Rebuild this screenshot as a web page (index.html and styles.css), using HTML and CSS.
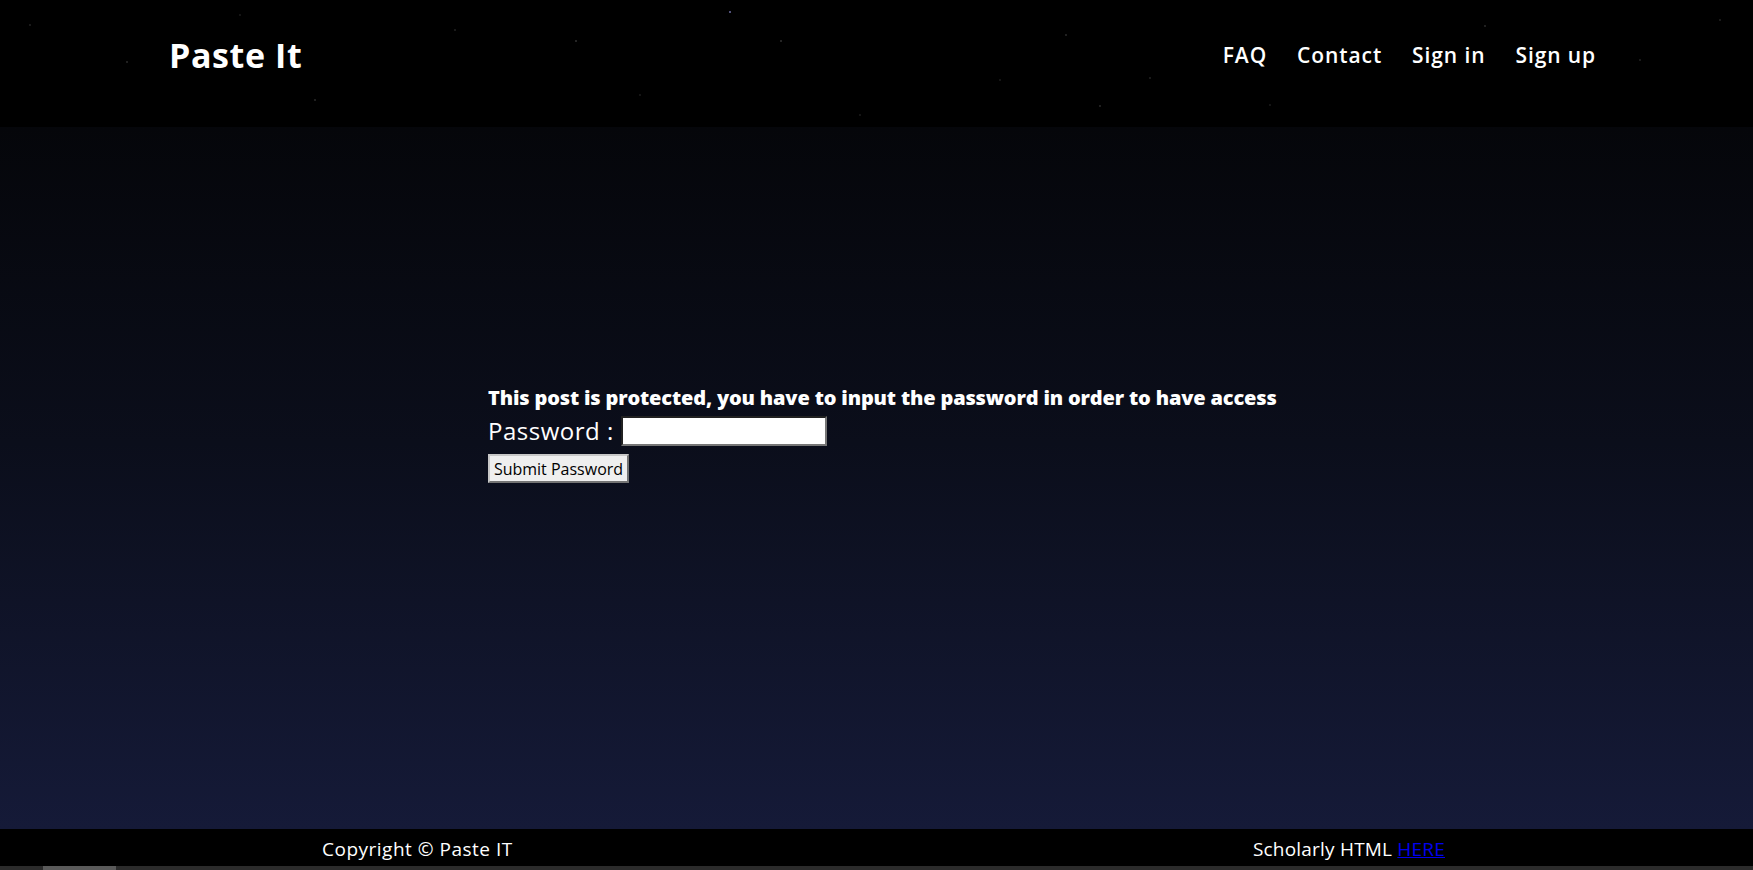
FILE: index.html
```html
<!DOCTYPE html>
<html lang="en">
<head>
<meta charset="utf-8">
<title>Paste It</title>
<link rel="stylesheet" href="styles.css">
</head>
<body>
<header class="site-header">
  <div class="header-row">
    <a class="logo" href="#">Paste It</a>
    <nav class="nav">
      <a href="#">FAQ</a>
      <a href="#">Contact</a>
      <a href="#">Sign in</a>
      <a href="#">Sign up</a>
    </nav>
  </div>
</header>
<main class="main">
  <form class="protect">
    <h3 class="protect-title">This post is protected, you have to input the password in order to have access</h3>
    <div class="pw-row">
      <label class="pw-label" for="pw">Password :</label>
      <input class="pw-input" id="pw" type="password">
    </div>
    <button class="pw-submit" type="button">Submit Password</button>
  </form>
</main>
<footer class="site-footer">
  <span>Copyright © Paste IT</span>
  <span class="scholarly">Scholarly HTML <a class="here" href="#">HERE</a></span>
</footer>
<div class="hscroll"><div class="hscroll-thumb"></div></div>
</body>
</html>
```
FILE: styles.css
```css
html, body {
  margin: 0;
  padding: 0;
  height: 100%;
  overflow: hidden;
  background: #000;
}
body {
  font-family: "Open Sans", "Liberation Sans", sans-serif;
  color: #fff;
}
.site-header {
  height: 127px;
  background-color: #000;
  background-image:
    radial-gradient(circle at 730px 12px, rgba(170,170,255,.9) 0, rgba(170,170,255,0) 1.5px),
    radial-gradient(circle at 576px 41px, rgba(255,255,255,.35) 0, rgba(255,255,255,0) 1.2px),
    radial-gradient(circle at 781px 41px, rgba(255,255,255,.35) 0, rgba(255,255,255,0) 1.2px),
    radial-gradient(circle at 455px 30px, rgba(255,255,255,.25) 0, rgba(255,255,255,0) 1.2px),
    radial-gradient(circle at 315px 100px, rgba(255,255,255,.3) 0, rgba(255,255,255,0) 1.2px),
    radial-gradient(circle at 127px 62px, rgba(255,255,255,.3) 0, rgba(255,255,255,0) 1.2px),
    radial-gradient(circle at 30px 25px, rgba(255,255,255,.25) 0, rgba(255,255,255,0) 1.2px),
    radial-gradient(circle at 1066px 35px, rgba(255,255,255,.3) 0, rgba(255,255,255,0) 1.2px),
    radial-gradient(circle at 1100px 106px, rgba(255,255,255,.3) 0, rgba(255,255,255,0) 1.2px),
    radial-gradient(circle at 1150px 78px, rgba(255,255,255,.25) 0, rgba(255,255,255,0) 1.2px),
    radial-gradient(circle at 1270px 105px, rgba(255,255,255,.2) 0, rgba(255,255,255,0) 1.2px),
    radial-gradient(circle at 1485px 26px, rgba(255,255,255,.3) 0, rgba(255,255,255,0) 1.2px),
    radial-gradient(circle at 1640px 60px, rgba(255,255,255,.25) 0, rgba(255,255,255,0) 1.2px),
    radial-gradient(circle at 1720px 20px, rgba(255,255,255,.25) 0, rgba(255,255,255,0) 1.2px),
    radial-gradient(circle at 1000px 80px, rgba(255,255,255,.2) 0, rgba(255,255,255,0) 1.2px),
    radial-gradient(circle at 860px 115px, rgba(255,255,255,.2) 0, rgba(255,255,255,0) 1.2px),
    radial-gradient(circle at 640px 95px, rgba(255,255,255,.2) 0, rgba(255,255,255,0) 1.2px),
    radial-gradient(circle at 240px 15px, rgba(255,255,255,.2) 0, rgba(255,255,255,0) 1.2px);
}
.header-row {
  height: 110px;
  display: flex;
  align-items: center;
  justify-content: space-between;
  padding: 0 157px 0 169px;
}
.logo {
  color: #fff;
  text-decoration: none;
  font-size: 34px;
  font-weight: 700;
  letter-spacing: 0.6px;
}
.nav {
  display: flex;
  gap: 30px;
}
.nav a {
  color: #fff;
  text-decoration: none;
  font-size: 21px;
  font-weight: 600;
  letter-spacing: 0.9px;
}
.main {
  height: 702px;
  background: linear-gradient(to bottom, #05060a 0%, #0b0e1b 45%, #151a38 100%);
  padding: 0 0 0 488px;
  box-sizing: border-box;
}
.protect {
  padding-top: 257px;
}
.protect-title {
  margin: 0;
  font-size: 20px;
  line-height: 28px;
  font-weight: 800;
  letter-spacing: -0.16px;
}
.pw-row {
  display: flex;
  align-items: center;
  gap: 7px;
  margin-top: 2px;
}
.pw-label {
  font-size: 24px;
  line-height: 34px;
  font-weight: 400;
  letter-spacing: 0.5px;
}
.pw-input {
  width: 206px;
  height: 30px;
  box-sizing: border-box;
  border: 2px inset #767676;
  background: #fff;
  padding: 1px 2px;
}
.pw-submit {
  display: block;
  margin-top: 6px;
  height: 29px;
  width: 141px;
  padding: 0;
  font-family: inherit;
  font-size: 16px;
  color: #000;
  background: #efefef;
  border: 2px outset #c8c8c8;
}
.site-footer {
  height: 37px;
  box-sizing: border-box;
  padding: 3px 308px 0 322px;
  background: #000;
  display: flex;
  align-items: center;
  justify-content: space-between;
  font-size: 19px;
  letter-spacing: 0.5px;
}
.scholarly {
  letter-spacing: 0.2px;
}
.here {
  color: #0000ee;
}
.hscroll {
  height: 4px;
  background: #2b2b2b;
}
.hscroll-thumb {
  margin-left: 43px;
  width: 73px;
  height: 4px;
  background: #5a5a5a;
}
```
